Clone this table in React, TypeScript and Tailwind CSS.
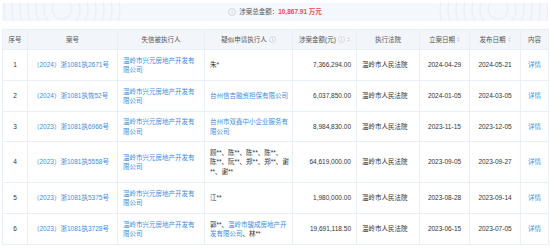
import type { ReactNode } from 'react'

const font = { fontFamily: '"Liberation Sans", "Noto Sans CJK SC", sans-serif' }

function InfoIcon({ className = '' }: { className?: string }) {
  return (
    <svg viewBox="0 0 10 10" className={className} fill="none">
      <circle cx="5" cy="5" r="4.4" stroke="#b8c0ca" strokeWidth="0.7" />
      <rect x="4.6" y="4.2" width="0.8" height="3" fill="#b8c0ca" />
      <circle cx="5" cy="3" r="0.5" fill="#b8c0ca" />
    </svg>
  )
}

function SortIcon() {
  return (
    <svg viewBox="0 0 4 8" className="ml-[2px] h-[5px] w-[3px]">
      <path d="M2 0.5 L3.6 3 L0.4 3 Z" fill="#b8c0ca" />
      <path d="M2 7.5 L3.6 5 L0.4 5 Z" fill="#b8c0ca" />
    </svg>
  )
}

type Row = {
  no: number
  caseNo: string
  debtor: string
  applicant: ReactNode
  amount: string
  court: string
  filed: string
  published: string
  h: string
}

const Link = ({ children }: { children: ReactNode }) => (
  <span className="text-[#3a8ee6]">{children}</span>
)

const rows: Row[] = [
  {
    no: 1,
    caseNo: '（2024）浙1081执2671号',
    debtor: '温岭市兴元房地产开发有限公司',
    applicant: '朱*',
    amount: '7,366,294.00',
    court: '温岭市人民法院',
    filed: '2024-04-29',
    published: '2024-05-21',
    h: 'h-[31px]',
  },
  {
    no: 2,
    caseNo: '（2024）浙1081执恢52号',
    debtor: '温岭市兴元房地产开发有限公司',
    applicant: <Link>台州信吉融资担保有限公司</Link>,
    amount: '6,037,850.00',
    court: '温岭市人民法院',
    filed: '2024-01-05',
    published: '2024-03-05',
    h: 'h-[31px]',
  },
  {
    no: 3,
    caseNo: '（2023）浙1081执6966号',
    debtor: '温岭市兴元房地产开发有限公司',
    applicant: <Link>台州市双鑫中小企业服务有限公司</Link>,
    amount: '8,984,830.00',
    court: '温岭市人民法院',
    filed: '2023-11-15',
    published: '2023-12-05',
    h: 'h-[30px]',
  },
  {
    no: 4,
    caseNo: '（2023）浙1081执5558号',
    debtor: '温岭市兴元房地产开发有限公司',
    applicant: (
      <>
        顾**、陈**、陈**、陈**、
        <br />
        陈**、阮**、郑**、郑**、谢
        <br />
        **、谢**
      </>
    ),
    amount: '64,619,000.00',
    court: '温岭市人民法院',
    filed: '2023-09-05',
    published: '2023-09-27',
    h: 'h-[41px]',
  },
  {
    no: 5,
    caseNo: '（2023）浙1081执5375号',
    debtor: '温岭市兴元房地产开发有限公司',
    applicant: '江**',
    amount: '1,980,000.00',
    court: '温岭市人民法院',
    filed: '2023-08-28',
    published: '2023-09-14',
    h: 'h-[31px]',
  },
  {
    no: 6,
    caseNo: '（2023）浙1081执3728号',
    debtor: '温岭市兴元房地产开发有限公司',
    applicant: (
      <>
        郭**、<Link>温岭市骏成房地产开发有限公司</Link>、林**
      </>
    ),
    amount: '19,691,118.50',
    court: '温岭市人民法院',
    filed: '2023-06-15',
    published: '2023-07-05',
    h: 'h-[31px]',
  },
]

function Rings({ className }: { className: string }) {
  return (
    <svg viewBox="0 0 120 60" className={className} fill="none">
      {[10, 18, 26, 34, 42, 50, 58].map((r) => (
        <circle key={r} cx="60" cy="20" r={r} stroke="#e3ebf5" strokeWidth="0.8" />
      ))}
    </svg>
  )
}

export default function App() {
  const td = 'border border-[#e9eff6] px-[5px] align-middle'
  return (
    <div className="h-[250px] w-[550px] overflow-hidden bg-white px-[2px] pt-[3px] text-[6.5px] leading-[9.5px] text-[#333]" style={font}>
      <div className="relative flex h-[18px] items-center justify-center overflow-hidden bg-[#f4f7fb]">
        <Rings className="absolute left-[0px] top-[-14px] h-[60px] w-[120px]" />
        <Rings className="absolute right-[-10px] top-[-14px] h-[60px] w-[120px]" />
        <div className="relative flex items-center">
          <InfoIcon className="mr-[3px] h-[8px] w-[8px]" />
          <span className="text-[#555]">涉案总金额：</span>
          <span className="font-bold text-[#f04a4a]">10,867.91 万元</span>
        </div>
      </div>
      <table className="mt-[8px] w-[546px] table-fixed border-collapse">
        <thead>
          <tr className="h-[20px] bg-[#f2f6fa] text-[#555]">
            <th className={`${td} w-[25px] text-center font-normal`}>序号</th>
            <th className={`${td} w-[90px] text-center font-normal`}>案号</th>
            <th className={`${td} w-[87px] text-center font-normal`}>失信被执行人</th>
            <th className={`${td} w-[88px] font-normal`}>
              <span className="flex items-center justify-center">
                疑似申请执行人
                <InfoIcon className="ml-[2px] h-[7px] w-[7px]" />
              </span>
            </th>
            <th className={`${td} w-[64px] font-normal`}>
              <span className="flex items-center justify-center">
                涉案金额(元)
                <InfoIcon className="ml-[2px] h-[7px] w-[7px]" />
                <SortIcon />
              </span>
            </th>
            <th className={`${td} w-[63px] text-center font-normal`}>执行法院</th>
            <th className={`${td} w-[50px] font-normal`}>
              <span className="flex items-center justify-center">
                立案日期
                <SortIcon />
              </span>
            </th>
            <th className={`${td} w-[51px] font-normal`}>
              <span className="flex items-center justify-center">
                发布日期
                <SortIcon />
              </span>
            </th>
            <th className={`${td} w-[28px] text-center font-normal`}>内容</th>
          </tr>
        </thead>
        <tbody>
          {rows.map((r) => (
            <tr key={r.no} className={r.h}>
              <td className={`${td} text-center`}>{r.no}</td>
              <td className={td}>
                <Link>{r.caseNo}</Link>
              </td>
              <td className={td}>
                <Link>{r.debtor}</Link>
              </td>
              <td className="border border-[#e9eff6] pl-[5px] pr-[1px] align-middle break-all">{r.applicant}</td>
              <td className={`${td} text-right`}>{r.amount}</td>
              <td className={td}>{r.court}</td>
              <td className={`${td} text-center`}>{r.filed}</td>
              <td className={`${td} text-center`}>{r.published}</td>
              <td className={`${td} text-center`}>
                <Link>详情</Link>
              </td>
            </tr>
          ))}
        </tbody>
      </table>
    </div>
  )
}
